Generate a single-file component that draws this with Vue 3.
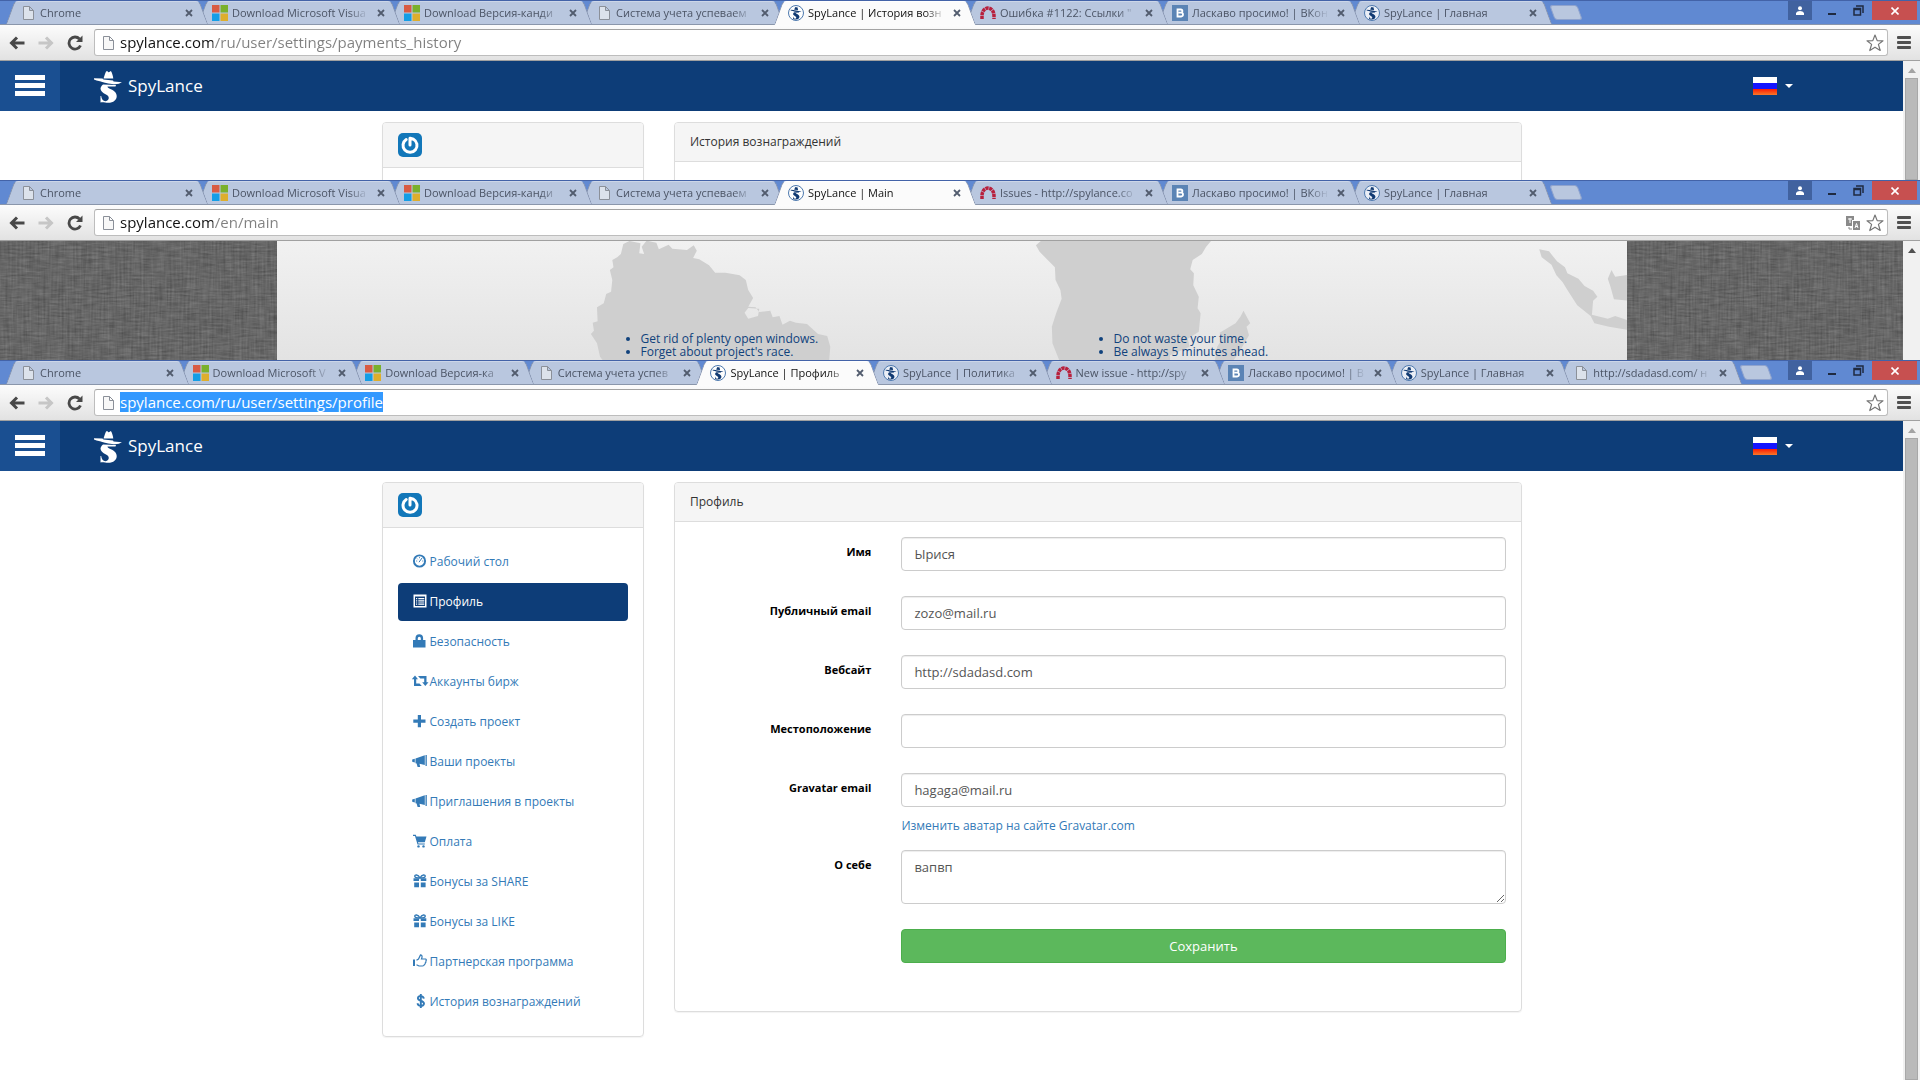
<script setup>
import { onMounted, ref } from "vue";

const tab = (icon, title) => ({ icon, title });

const windows = [
  {
    id: "history",
    path: "spylance.com/ru/user/settings/payments_history",
    tabs: [
      tab("doc", "Chrome"),
      tab("ms", "Download Microsoft Visua"),
      tab("ms", "Download Версия-канди"),
      tab("doc", "Система учета успеваем"),
      tab("spy", "SpyLance | История возн"),
      tab("redmine", 'Ошибка #1122: Ссылки "'),
      tab("vk", "Ласкаво просимо! | ВКон"),
      tab("spy", "SpyLance | Главная"),
    ],
  },
  {
    id: "main",
    path: "spylance.com/en/main",
    translate: true,
    tabs: [
      tab("doc", "Chrome"),
      tab("ms", "Download Microsoft Visua"),
      tab("ms", "Download Версия-канди"),
      tab("doc", "Система учета успеваем"),
      tab("spy", "SpyLance | Main"),
      tab("redmine", "Issues - http://spylance.co"),
      tab("vk", "Ласкаво просимо! | ВКон"),
      tab("spy", "SpyLance | Главная"),
    ],
  },
  {
    id: "profile",
    path: "spylance.com/ru/user/settings/profile",
    tabs: [
      tab("doc", "Chrome"),
      tab("ms", "Download Microsoft V"),
      tab("ms", "Download Версия-ка"),
      tab("doc", "Система учета успев"),
      tab("spy", "SpyLance | Профиль"),
      tab("spy", "SpyLance | Политика"),
      tab("redmine", "New issue - http://spy"),
      tab("vk", "Ласкаво просимо! | В"),
      tab("spy", "SpyLance | Главная"),
      tab("doc", "http://sdadasd.com/ н"),
    ],
  },
];

const activeTab = 4;

const menu = [
  { icon: "dashboard", label: "Рабочий стол" },
  { icon: "list", label: "Профиль", active: true },
  { icon: "lock", label: "Безопасность" },
  { icon: "retweet", label: "Аккаунты бирж" },
  { icon: "plus", label: "Создать проект" },
  { icon: "bullhorn", label: "Ваши проекты" },
  { icon: "bullhorn", label: "Приглашения в проекты" },
  { icon: "cart", label: "Оплата" },
  { icon: "gift", label: "Бонусы за SHARE" },
  { icon: "gift", label: "Бонусы за LIKE" },
  { icon: "thumb", label: "Партнерская программа" },
  { icon: "usd", label: "История вознаграждений" },
];

const fields = ref([
  { id: "name", label: "Имя", value: "Ырися" },
  { id: "public-email", label: "Публичный email", value: "zozo@mail.ru" },
  { id: "website", label: "Вебсайт", value: "http://sdadasd.com" },
  { id: "location", label: "Местоположение", value: "" },
  {
    id: "gravatar-email",
    label: "Gravatar email",
    value: "hagaga@mail.ru",
    help: "Изменить аватар на сайте Gravatar.com",
  },
]);
const bio = ref("вапвп");

onMounted(() => {
  const address = document.getElementById("address-profile");
  address.focus({ preventScroll: true });
  address.select();
});
</script>

<template>
  <svg class="sprite" aria-hidden="true">
    <symbol id="i-doc" viewBox="0 0 16 16">
      <path
        d="M3.5 1.5h6l4 4v9h-10z M9.5 1.5v4h4"
        fill="#f4f4f4"
        fill-opacity="0.6"
        stroke="#8b9099"
      />
    </symbol>
    <symbol id="i-ms" viewBox="0 0 16 16">
      <path d="M0 0h7.5v7.5H0z" fill="#d95b43" />
      <path d="M8.5 0H16v7.5H8.5z" fill="#7ab02c" />
      <path d="M0 8.5h7.5V16H0z" fill="#149ee6" />
      <path d="M8.5 8.5H16V16H8.5z" fill="#deae2c" />
    </symbol>
    <symbol id="i-logo" viewBox="0 0 28 33">
      <path
        d="M9.5 8.5 11 4Q12.5-1 14.2 2.2 15.2 2.2 16.8 1 18.3 2.5 19.3 8.6z M0 8.2 8.5 8.6 9.5 9.6 19 10.6 19.6 11.4 28 12.2Q24 15 18 14 10 13 6 11.2 2 10.6 0 9.4z M9 14.5C4.5 18.5 6.5 22 12 24.5 16 26.5 15.5 30 11.5 31.3 9 31 7.5 29 7.2 26H6.5V32.5C9 31.6 11 32.8 14 32.8 22.5 32.8 25 25.5 20.5 21.5 17.5 19 13.5 18.5 13.5 16.6H18L21.5 16.4 22 15z"
      />
    </symbol>
    <symbol id="i-spy" viewBox="0 0 16 16">
      <circle cx="8" cy="8" r="7.5" fill="#fff" fill-opacity="0.7" stroke="#4d79ae" />
      <use href="#i-logo" x="2.5" y="1.5" width="11" height="13" fill="#113a72" />
    </symbol>
    <symbol id="i-redmine" viewBox="0 0 16 16">
      <path
        d="M2 14V11C2 0.5 14 0.5 14 11V14"
        fill="none"
        stroke="#b8203d"
        stroke-width="3.5"
        stroke-dasharray="3.2 0.6"
      />
    </symbol>
    <symbol id="i-vk" viewBox="0 0 16 16">
      <path d="M0 0h16v16H0z" fill="#5b84b5" />
      <path
        d="M5.5 4.5h3.3a1.5 1.5 0 0 1 0 3.2H6.5h2.6a1.8 1.8 0 0 1 0 3.8H5.5z"
        fill="none"
        stroke="#fff"
        stroke-width="1.8"
      />
    </symbol>
    <symbol id="i-dashboard" viewBox="0 0 14 14">
      <circle cx="6.5" cy="7" r="5.6" fill="none" stroke="currentColor" stroke-width="1.9" />
      <path
        d="M6 8.2 9 4M3.2 7h1M4.1 4.6l.7.7M6.5 3.2v1M9.3 7h1"
        stroke="currentColor"
      />
    </symbol>
    <symbol id="i-list" viewBox="0 0 14 14">
      <path
        d="M0.5 0.5h13v13h-13z M2 2.5v9.5h10V2.5z M3 4h1.2v1.2H3z M3 6.2h1.2v1.2H3z M3 8.4h1.2v1.2H3z M5.3 4h6v1.2h-6z M5.3 6.2h6v1.2h-6z M5.3 8.4h6v1.2h-6z M5.3 10.3h6v.8h-6z M3 10.3h1.2v.8H3z"
        fill="currentColor"
        fill-rule="evenodd"
      />
    </symbol>
    <symbol id="i-lock" viewBox="0 0 14 14">
      <path
        d="M0 6h12.5v7.5H0z M2.5 6.5V4a3.8 3.8 0 0 1 7.6 0v2.5H7.8V4.2a1.5 1.5 0 0 0-3 0v2.3z"
        fill="currentColor"
      />
    </symbol>
    <symbol id="i-retweet" viewBox="0 0 14 14">
      <path
        d="M2 1.5 5 5.2H3.2V9.5H6.5L8.8 12H1V5.2H-1.2z M5 2H13.5V8.2H15.5L12.3 12 9.2 8.2H11.2V4.5H7.3z"
        fill="currentColor"
      />
    </symbol>
    <symbol id="i-plus" viewBox="0 0 14 14">
      <path d="M4.8 1h3.2v4.5h4.5v3.2H8v4.5H4.8V8.7H.3V5.5h4.5z" fill="currentColor" />
    </symbol>
    <symbol id="i-bullhorn" viewBox="0 0 14 14">
      <path
        d="M12.5 1H13.8V12H12.5z M2.5 4.5 11.8 1.2V11L6.5 9.8 7.2 13H4.6L3.6 9.5 2.5 9.2z M-.8 5.4 1.8 4.8V8.4L-.8 7.8z"
        fill="currentColor"
      />
    </symbol>
    <symbol id="i-cart" viewBox="0 0 14 14">
      <path
        d="M0 .8H2.8L3.4 2.5H13.5L11.8 8.2H5L5.4 9.4H11.8V10.6H4.5L2 2H0z"
        fill="currentColor"
      />
      <circle cx="5.5" cy="12.4" r="1.2" fill="currentColor" />
      <circle cx="10.5" cy="12.4" r="1.2" fill="currentColor" />
    </symbol>
    <symbol id="i-gift" viewBox="0 0 14 14">
      <path
        d="M.5 4.2H6V7H.5z M7.8 4.2H13.3V7H7.8z M1.2 8.5H6V13.3H1.2z M7.8 8.5H12.6V13.3H7.8z"
        fill="currentColor"
      />
      <path
        d="M7 4C5 0 1.5 .5 1.8 2.4 2 3.8 4 4 7 4 10 4 12 3.8 12.2 2.4 12.5 .5 9 0 7 4z"
        fill="none"
        stroke="currentColor"
        stroke-width="1.4"
      />
    </symbol>
    <symbol id="i-thumb" viewBox="0 0 14 14">
      <path d="M0 5.5h2v6.5H0z" fill="currentColor" />
      <path
        d="M3.5 6.2 5.5 5 7.5 .9C9.5 .9 9.3 3 8.5 5H12.6C13.6 5.4 13.4 6.4 12.9 6.9 13.2 7.8 12.9 8.5 12.3 8.9 12.4 9.8 12 10.3 11.4 10.5 11.2 11.7 10.5 12 9.5 12H6L3.5 10.8"
        fill="none"
        stroke="currentColor"
        stroke-width="1.2"
      />
    </symbol>
    <symbol id="i-usd" viewBox="0 0 14 14">
      <path
        d="M10.8 4.6C10.5 1.3 4.9 1.3 4.9 4.2 4.9 7.2 11 6.3 11 9.6 11 12.7 4.7 12.6 4.6 9.2 M7.8 0V14"
        fill="none"
        stroke="currentColor"
        stroke-width="1.9"
      />
    </symbol>
    <symbol id="i-gravatar" viewBox="0 0 24 24">
      <rect width="24" height="24" rx="5" fill="#1277b9" />
      <path
        d="M8.2 6.5A7 7 0 1 0 15.5 6.3L12 5.2V12"
        fill="none"
        stroke="#fff"
        stroke-width="3"
        stroke-linecap="round"
        stroke-linejoin="round"
      />
    </symbol>
    <filter
      id="linen"
      x="0"
      y="0"
      width="100%"
      height="100%"
      color-interpolation-filters="sRGB"
    >
      <feTurbulence type="fractalNoise" baseFrequency="0.06 0.5" numOctaves="3" seed="4" result="weft" />
      <feColorMatrix
        in="weft"
        values="0.16 0 0 0 0.13  0.16 0 0 0 0.13  0.16 0 0 0 0.13  0 0 0 0 1"
        result="rows"
      />
      <feTurbulence type="fractalNoise" baseFrequency="0.5 0.03" numOctaves="2" seed="9" />
      <feColorMatrix
        values="0.12 0 0 0 0.13  0.12 0 0 0 0.13  0.12 0 0 0 0.13  0 0 0 0 1"
      />
      <feComposite in2="rows" operator="arithmetic" k1="0" k2="1" k3="1" k4="0" />
    </filter>
  </svg>

  <div class="desktop">
    <section v-for="win in windows" :key="win.id" :class="['window', win.id]">
      <div class="tab-strip">
        <div class="tabs">
          <div
            v-for="(item, i) in win.tabs"
            :key="i"
            :class="['tab', { active: i === activeTab }]"
            :style="{ zIndex: i === activeTab ? 20 : 10 - i }"
          >
            <svg class="favicon"><use :href="'#i-' + item.icon" /></svg>
            <span class="tab-title">{{ item.title }}</span>
            <button class="tab-close" aria-label="Close tab">
              <svg viewBox="0 0 8 8">
                <path d="M1 1l6 6M7 1l-6 6" stroke="currentColor" stroke-width="1.8" />
              </svg>
            </button>
          </div>
          <button class="new-tab" aria-label="New tab"></button>
        </div>
        <div class="controls">
          <button class="user" aria-label="User">
            <svg viewBox="0 0 10 10">
              <circle cx="5" cy="2.3" r="2" />
              <path d="M1 9V7q1-2 4-2t4 2v2z" />
            </svg>
          </button>
          <button class="minimize" aria-label="Minimize"></button>
          <button class="restore" aria-label="Restore">
            <svg viewBox="0 0 11 11">
              <path d="M1 3.5h6.5V10H1z M1 4.5h6 M3 1h7v7" fill="none" stroke="#1f2a40" stroke-width="1.5" />
            </svg>
          </button>
          <button class="close" aria-label="Close">
            <svg viewBox="0 0 8 8">
              <path d="M.5.5l7 7M7.5.5l-7 7" stroke="#fff" stroke-width="1.6" />
            </svg>
          </button>
        </div>
      </div>

      <div class="toolbar">
        <button aria-label="Back">
          <svg viewBox="0 0 16 16">
            <path d="M15.5 8H2.5M8 2.5 2.5 8 8 13.5" fill="none" stroke="#484848" stroke-width="3" />
          </svg>
        </button>
        <button aria-label="Forward">
          <svg viewBox="0 0 16 16">
            <path d="M.5 8H13.5M8 2.5 13.5 8 8 13.5" fill="none" stroke="#c6c6c6" stroke-width="3" />
          </svg>
        </button>
        <button aria-label="Reload">
          <svg viewBox="0 0 16 16">
            <path d="M13.5 10.5A6 6 0 1 1 12.5 4" fill="none" stroke="#484848" stroke-width="2.8" />
            <path d="M15.5 .5V7H9z" fill="#484848" />
          </svg>
        </button>
        <div class="omnibox">
          <svg class="favicon"><use href="#i-doc" /></svg>
          <input
            :id="'address-' + win.id"
            class="address"
            type="text"
            aria-label="Address"
            spellcheck="false"
            :value="win.path"
          />
          <svg v-if="win.translate" class="translate" viewBox="0 0 14 14">
            <path d="M0 0h8v4H6v6H0z M7 5h7v9H7z" fill="#8a8a8a" />
            <path d="M2 3h4M4 2v5M9 12l1.5-4.5L12 12M9.5 10.5h2" fill="none" stroke="#fff" />
            <path d="M3 11v2h3" fill="none" stroke="#8a8a8a" />
          </svg>
          <svg class="star" viewBox="0 0 18 18">
            <path
              d="M9 1l2.2 5.6 5.8.2-4.6 3.6 1.8 6.1L9 13.2l-5.2 3.3 1.8-6.1L1 6.8l5.8-.2z"
              fill="#fff"
              stroke="#757575"
              stroke-width="1.2"
              stroke-linejoin="round"
            />
          </svg>
        </div>
        <button class="menu" aria-label="Menu"><i></i><i></i><i></i></button>
      </div>

      <div class="viewport">
        <div v-if="win.id === 'main'" class="landing">
          <svg class="linen"><rect width="100%" height="100%" filter="url(#linen)" /></svg>
          <div class="hero">
            <svg class="map" viewBox="0 0 1350 119" preserveAspectRatio="xMidYMin slice">
              <g transform="translate(-277 -61) scale(0.6123 0.3333)">
                <path
                  d="M1028 183 1018 192 1014 222 1008 232 1000 240 1002 262 996 270 1000 300 998 335 990 342 986 370 975 382 976 424 968 428 970 452 965 462 975 490 980 530 986 545H1354L1356 500 1351 468 1336 462 1318 432 1300 428 1290 422 1278 434 1273 408 1262 412 1258 392 1240 396 1234 382 1222 380 1230 354 1222 330 1218 300 1208 286 1185 278 1168 278 1158 256 1142 238 1132 234 1138 212 1133 196 1122 210 1098 206 1092 194 1076 208 1072 188 1056 182 1048 200 1052 222 1044 220 1046 190z M1216 398 1222 384 1240 386 1238 408 1222 416z"
                />
              </g>
              <g transform="translate(683 -61) scale(0.6123 0.3333)">
                <path
                  d="M132 183 124 196 130 215 142 238 155 262 156 300 164 330 166 356 157 400 150 440 151 490 163 545H343L343 526 375 500 372 476 390 455 393 400 388 385 390 350 381 316 382 280 376 268 380 240 395 222 402 200 410 183z M463 392 474 430 468 440 472 466 455 520 445 545H416L420 500 428 478 424 458 450 430 458 410z M946 208 962 214 975 244 988 262 992 280 1010 296 1020 318 1034 332 1041 350 1034 362 1032 404 1058 416 1070 408 1092 422V450L1060 440 1036 430 1030 408 1008 376 992 330 984 306 974 286 966 254 950 232z M1064 270 1070 290 1092 284V362L1068 358 1062 318 1058 296z"
                />
              </g>
            </svg>
            <ul>
              <li>Get rid of plenty open windows.</li>
              <li>Forget about project's race.</li>
            </ul>
            <ul>
              <li>Do not waste your time.</li>
              <li>Be always 5 minutes ahead.</li>
            </ul>
          </div>
          <svg class="linen"><rect width="100%" height="100%" filter="url(#linen)" /></svg>
        </div>

        <div v-else class="page">
          <nav class="navbar">
            <button class="toggler" aria-label="Меню"><i></i><i></i><i></i></button>
            <a class="brand" href="#">
              <svg><use href="#i-logo" /></svg>
              <span>SpyLance</span>
            </a>
            <button class="language" aria-label="Русский">
              <span class="flag"></span>
              <span class="caret"></span>
            </button>
          </nav>

          <div class="container">
            <aside class="col-side">
              <div class="panel">
                <div class="panel-heading">
                  <svg class="avatar"><use href="#i-gravatar" /></svg>
                </div>
                <ul v-if="win.id === 'profile'" class="panel-body pills">
                  <li v-for="item in menu" :key="item.label">
                    <a href="#" :class="{ active: item.active }">
                      <svg><use :href="'#i-' + item.icon" /></svg>
                      {{ item.label }}
                    </a>
                  </li>
                </ul>
                <div v-else class="panel-body blank"></div>
              </div>
            </aside>

            <main class="col-main">
              <div class="panel">
                <div class="panel-heading">
                  {{ win.id === "profile" ? "Профиль" : "История вознаграждений" }}
                </div>
                <form
                  v-if="win.id === 'profile'"
                  class="panel-body"
                  @submit.prevent
                >
                  <div v-for="field in fields" :key="field.id" class="form-group">
                    <label :for="field.id">{{ field.label }}</label>
                    <div class="control">
                      <input :id="field.id" v-model="field.value" type="text" />
                      <a v-if="field.help" class="help" href="#">{{ field.help }}</a>
                    </div>
                  </div>
                  <div class="form-group">
                    <label for="bio">О себе</label>
                    <div class="control">
                      <textarea id="bio" v-model="bio"></textarea>
                    </div>
                  </div>
                  <div class="form-group">
                    <div class="control submit">
                      <button type="submit">Сохранить</button>
                    </div>
                  </div>
                </form>
                <div v-else class="panel-body blank"></div>
              </div>
            </main>
          </div>
        </div>

        <div class="scrollbar">
          <span class="arrow"></span>
          <span v-if="win.id !== 'main'" class="thumb"></span>
        </div>
      </div>
    </section>
  </div>
</template>

<style>
body {
  margin: 0;
  background: #fff;
}
</style>

<style scoped>
* {
  box-sizing: border-box;
}

button {
  padding: 0;
  border: 0;
  background: none;
  font: inherit;
}

svg {
  display: block;
}

.sprite {
  position: absolute;
  width: 0;
  height: 0;
}

.sprite symbol {
  overflow: visible;
}

.desktop {
  display: flex;
  flex-direction: column;
  min-height: 100vh;
  font-family: "Open Sans", "Noto Sans", sans-serif;
}

.window {
  display: flex;
  flex-direction: column;
  flex: 0 0 180px;
  height: 180px;
  overflow: hidden;
}

.window.profile {
  flex: 1 0 auto;
  height: auto;
}

/* TABS */
.tab-strip {
  display: flex;
  height: 25px;
  padding-left: 6px;
  background: #6089d2;
  border-top: 1px solid #4363a8;
  border-bottom: 1px solid #8a96ab;
}

.tabs {
  display: flex;
  flex: 1;
  min-width: 0;
  padding-right: 18px;
}

.tab {
  position: relative;
  display: flex;
  align-items: center;
  flex: 0 1 192px;
  min-width: 0;
  height: 23px;
  padding: 0 5px 0 14px;
  color: #4b5465;
  font-size: 11px;
}

.tab::before,
.tab::after {
  content: "";
  position: absolute;
  z-index: -1;
  top: 0;
  bottom: 0;
  background: #b9c7df;
  border-top: 1px solid #ccd6e8;
}

.tab::before {
  left: 0;
  right: 50%;
  border-left: 1px solid #8391ad;
  border-radius: 4px 0 0 0;
  transform: skewX(-20deg);
  transform-origin: bottom;
}

.tab::after {
  left: 40%;
  right: -10px;
  border-right: 1px solid #8391ad;
  border-radius: 0 4px 0 0;
  transform: skewX(20deg);
  transform-origin: bottom;
}

.tab.active {
  height: 24px;
  padding-bottom: 1px;
  color: #111;
}

.tab.active::before,
.tab.active::after {
  background: #fbfbfb;
  border-top-color: #fff;
}

.favicon {
  flex: none;
  width: 16px;
  height: 16px;
}

.tab-title {
  flex: 1;
  min-width: 0;
  margin: 0 8px 0 4px;
  overflow: hidden;
  white-space: nowrap;
  mask-image: linear-gradient(to left, transparent, #000 20px);
}

.tab-close {
  color: #525c6e;
}

.tab-close svg {
  width: 8px;
  height: 8px;
}

.new-tab {
  flex: none;
  width: 28px;
  height: 15px;
  margin: 4px 0 0 10px;
  background: #b9c7df;
  border: 1px solid #8fa3cd;
  border-radius: 3px;
  transform: skewX(20deg);
}

/* WINDOW CONTROLS */
.controls {
  display: flex;
  height: 19px;
  margin-right: 3px;
}

.controls button {
  display: flex;
  align-items: center;
  justify-content: center;
}

.user {
  width: 24px;
  margin-right: 16px;
  background: #41629f;
  fill: #fff;
}

.user svg {
  width: 10px;
  height: 10px;
}

.minimize {
  align-self: center;
  width: 8px;
  height: 2px;
  margin: 6px 17px 0 0;
  background: #1f2a40;
}

.restore {
  margin-right: 8px;
}

.restore svg {
  width: 11px;
  height: 11px;
}

.close {
  width: 45px;
  background: #c75050;
}

.close svg {
  width: 8px;
  height: 8px;
}

/* TOOLBAR */
.toolbar {
  display: flex;
  align-items: center;
  gap: 13px;
  height: 36px;
  padding: 0 9px;
  background: linear-gradient(#fcfcfc, #e2e2e2);
  border-bottom: 1px solid #a0a0a0;
}

.toolbar > button svg {
  width: 16px;
  height: 16px;
}

.omnibox {
  display: flex;
  align-items: center;
  flex: 1;
  height: 27px;
  margin-left: -2px;
  padding: 0 3px 0 5px;
  background: #fff;
  border: 1px solid #bdbdbd;
  border-top-color: #a3a3a3;
  border-radius: 3px;
}

.address {
  flex: 1;
  min-width: 0;
  height: 22px;
  margin-left: 4px;
  padding: 0 0 2px;
  border: 0;
  outline: 0;
  background: linear-gradient(90deg, #111 93px, #808080 93px);
  background-clip: text;
  color: transparent;
  font-family: inherit;
  font-size: 15px;
}

.profile .address {
  background: none;
  color: #111;
}

.address::selection {
  background: #3399ff;
  color: #fff;
}

.translate {
  width: 14px;
  height: 14px;
  margin-right: 6px;
}

.star {
  width: 18px;
  height: 18px;
}

.menu,
.toggler {
  display: flex;
  flex-direction: column;
}

.menu {
  gap: 2px;
  width: 14px;
  margin-left: -4px;
}

.menu i {
  height: 3px;
  background: #505050;
  border-radius: 1px;
}

/* VIEWPORT */
.viewport {
  display: flex;
  flex: 1;
  min-height: 0;
}

.scrollbar {
  display: flex;
  flex-direction: column;
  align-items: center;
  gap: 5px;
  width: 17px;
  padding-top: 7px;
  background: #f1f1f1;
}

.arrow,
.caret {
  width: 0;
  height: 0;
  border: 4px solid transparent;
}

.arrow {
  border-top: 0;
  border-bottom: 5px solid #a3a3a3;
}

.main .arrow {
  border-bottom-color: #505050;
}

.thumb {
  flex: 1;
  width: 13px;
  background: #bababa;
  border: 1px solid #a8a8a8;
}

.page {
  flex: 1;
  min-width: 0;
  color: #333;
  font-size: 12px;
  line-height: 18px;
}

/* LANDING */
.landing {
  display: flex;
  flex: 1;
  min-width: 0;
}

.linen {
  flex: 1;
  min-width: 0;
  height: 100%;
}

.hero {
  position: relative;
  display: flex;
  flex: 0 1 1350px;
  padding: 91px 80px 0 324px;
  background: linear-gradient(#f1f1f1, #e3e3e3);
}

.map {
  position: absolute;
  inset: 0;
  width: 100%;
  height: 100%;
  fill: #cfcfcf;
  fill-rule: evenodd;
}

.hero ul {
  position: relative;
  flex: 1;
  margin: 0;
  padding-left: 40px;
  color: #10427c;
  font-size: 12px;
  line-height: 13px;
}

/* NAVBAR */
.navbar {
  display: flex;
  align-items: center;
  height: 50px;
  background: #0d3d78;
}

.toggler {
  gap: 3px;
  justify-content: center;
  width: 60px;
  height: 50px;
  padding: 0 15px 1px;
  background: #1a4f91;
}

.toggler i {
  height: 5px;
  background: #fff;
}

.brand {
  display: flex;
  align-items: center;
  gap: 6px;
  margin: 0 auto 0 34px;
  color: #fff;
  font-size: 17px;
  text-decoration: none;
}

.brand svg {
  width: 28px;
  height: 33px;
  fill: #fff;
}

.language {
  display: flex;
  align-items: center;
  gap: 8px;
  margin-right: 110px;
}

.flag {
  width: 24px;
  height: 18px;
  background: linear-gradient(
    #fff 6px,
    #1414ff 6px,
    #1414ff 12px,
    #ff1a00 12px,
    #f7792a
  );
}

.caret {
  border-top-color: #fff;
  border-bottom: 0;
}

/* PANELS */
.container {
  display: flex;
  max-width: 1170px;
  margin: 11px auto 0;
}

.col-side {
  width: 25%;
  padding: 0 15px;
}

.col-main {
  width: 75%;
  padding: 0 15px;
}

.panel {
  margin-bottom: 20px;
  border: 1px solid #ddd;
  border-radius: 4px;
  box-shadow: 0 1px 1px rgba(0, 0, 0, 0.05);
}

.panel-heading {
  padding: 10px 15px;
  background: #f5f5f5;
  border-bottom: 1px solid #ddd;
  border-radius: 3px 3px 0 0;
}

.panel-body {
  padding: 15px;
}

.panel-body.blank {
  min-height: 120px;
}

.avatar {
  width: 24px;
  height: 24px;
}

.pills {
  display: flex;
  flex-direction: column;
  gap: 2px;
  margin: 0;
  list-style: none;
}

.pills a {
  display: flex;
  align-items: center;
  gap: 3px;
  padding: 10px 15px;
  border-radius: 4px;
  color: #337ab7;
  text-decoration: none;
  white-space: nowrap;
}

.pills a.active {
  background: #0d3d78;
  color: #fff;
}

.pills svg {
  width: 14px;
  height: 14px;
  margin-bottom: 2px;
  overflow: visible;
}

/* FORM */
.form-group {
  display: flex;
  margin: 0 -15px;
}

.form-group label {
  width: 25%;
  padding: 6px 15px 0;
  color: #000;
  font-size: 11px;
  font-weight: 700;
  text-align: right;
}

.control {
  display: flex;
  flex-direction: column;
  width: 75%;
  margin-left: auto;
  padding: 0 15px 25px;
}

.control input,
.control textarea {
  width: 100%;
  height: 34px;
  padding: 6px 12px;
  border: 1px solid #ccc;
  border-radius: 4px;
  box-shadow: inset 0 1px 1px rgba(0, 0, 0, 0.075);
  color: #555;
  font-family: inherit;
  font-size: 13px;
  line-height: 20px;
}

.control textarea {
  height: 54px;
}

.control:has(.help) {
  padding-bottom: 15px;
}

.help {
  margin-top: 10px;
  color: #337ab7;
  text-decoration: none;
}

.submit {
  padding-bottom: 33px;
}

.submit button {
  height: 34px;
  background: #5cb85c;
  border: 1px solid #4cae4c;
  border-radius: 4px;
  color: #fff;
  font-size: 13px;
}
</style>
